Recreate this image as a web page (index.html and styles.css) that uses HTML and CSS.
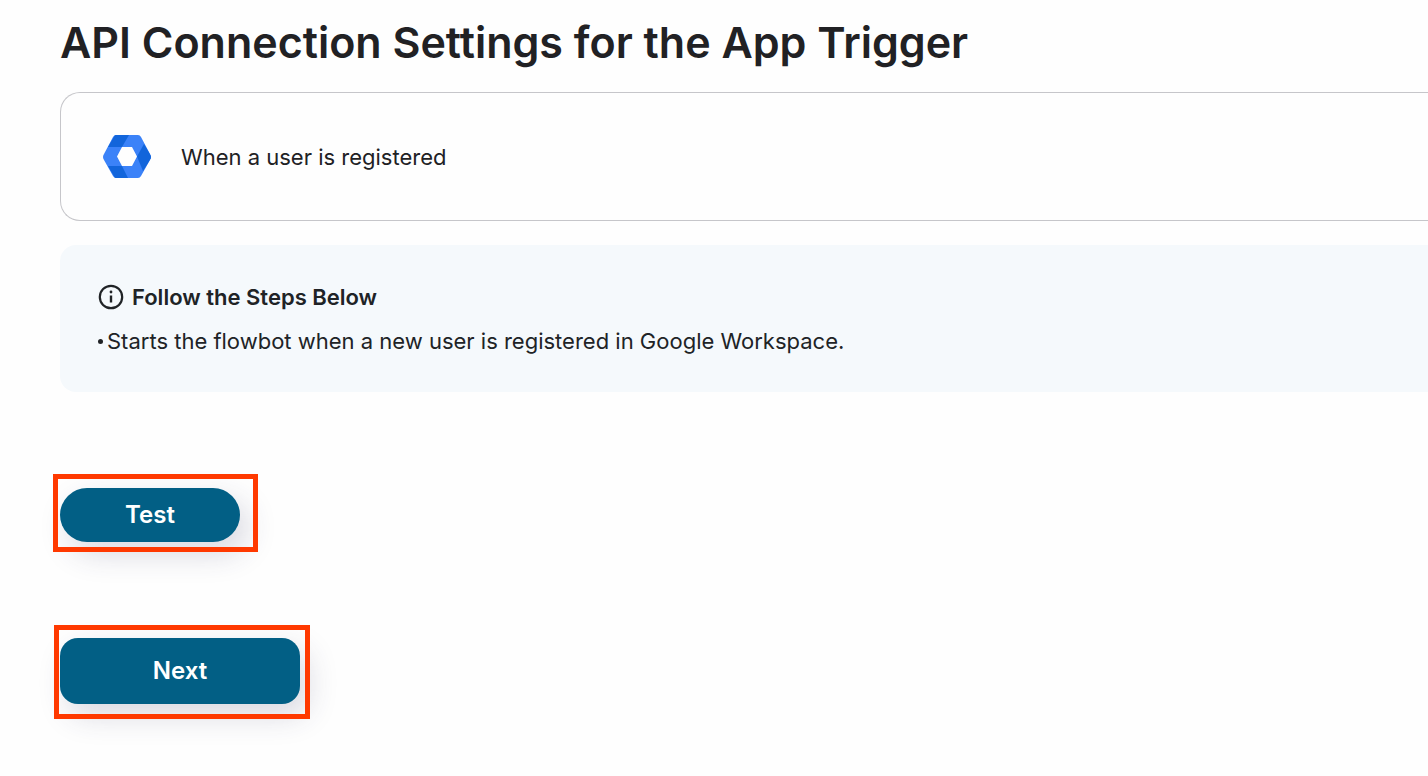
FILE: index.html
```html
<!DOCTYPE html>
<html lang="en">
<head>
<meta charset="UTF-8">
<meta name="viewport" content="initial-scale=1, width=device-width">
<title>API Connection Settings</title>
<link rel="stylesheet" href="styles.css">
</head>
<body>
<main>
<h1>API Connection Settings for the App Trigger</h1>
<section class="trigger">
	<svg class="logo" viewBox="0 0 48 43" aria-hidden="true">
		<defs>
			<clipPath id="hexagon"><path clip-rule="evenodd" d="M13 0H35Q37 0 38 2L47 19Q49 22 47 25L38 41Q37 43 35 43H13Q11 43 10 41L1 25Q-1 22 1 19L10 2Q11 0 13 0ZM19 12L14 21.500L19 31H29L34 21.500L29 12Z"/></clipPath>
		</defs>
		<g clip-path="url(#hexagon)">
			<path fill="#3b82f8" d="M0 0H48V43H0Z"/>
			<path fill="#1265db" d="M5 12L12 0H26L19 12Z"/>
			<path fill="#1265db" d="M5 31H19L25 43H12Z"/>
			<path fill="#1265db" d="M41 9L49 22L40 36L34 21.500Z"/>
		</g>
	</svg>
	<p>When a user is registered</p>
</section>
<section class="steps">
	<h2>
		<svg class="info" viewBox="0 0 26 26" aria-hidden="true">
			<circle cx="13" cy="13" r="11.2" fill="none" stroke="#202326" stroke-width="2.2"/>
			<circle cx="13" cy="8" r="1.4" fill="#202326"/>
			<path fill="#202326" d="M11.8 11.5h2.4v7h-2.4z"/>
		</svg>
		Follow the Steps Below
	</h2>
	<ul>
		<li>Starts the flowbot when a new user is registered in Google Workspace.</li>
	</ul>
</section>
<div class="action action-test"><button type="button" class="pill">Test</button></div>
<div class="action action-next"><button type="button">Next</button></div>
</main>
</body>
</html>
```

FILE: styles.css
```css
* {box-sizing:border-box;}
body {margin:0; background:#fefefe; color:#212124; font-family:Inter, "Liberation Sans", sans-serif; font-size:22px; line-height:32px;}
main {padding:14px 0 56px 60px;}
h1, h2, p, ul {margin:0;}
h1 {font-size:43px; line-height:56px; font-weight:600; margin-bottom:22px;}

.trigger {display:flex; align-items:center; gap:30px; padding:42px; margin-bottom:24px; border:1px solid #c6c6ca; border-right:0; border-radius:20px 0 0 20px;}
.logo {width:48px; height:43px;}

.steps {padding:36px 38px 35px; margin-bottom:96px; background:#f5f9fc; border-radius:16px 0 0 16px; color:#202326;}
h2 {display:flex; align-items:center; gap:8px; margin-bottom:12px; font-size:22px; line-height:32px; font-weight:600;}
.info {width:26px; height:26px;}
.steps ul {padding:0; list-style:none;}
.steps li {display:flex; align-items:center; gap:4px;}
.steps li::before {content:""; width:5px; height:5px; border-radius:50%; background:#202326;}

.action {position:relative; width:fit-content;}
.action-test {margin-bottom:96px;}
button {display:block; width:240px; height:66px; padding:0; border:0; border-radius:18px; background:#025f85; color:#fff; font:600 24px/32px Inter, "Liberation Sans", sans-serif; box-shadow:8px 12px 30px rgba(50,50,93,0.18); cursor:pointer;}
.pill {width:180px; height:54px; border-radius:27px;}

/* highlight frames */
.action::after {content:""; position:absolute; border:5px solid #ff3900; pointer-events:none;}
.action-test::after {inset:-14px -18px -10px -7px;}
.action-next::after {inset:-13px -10px -15px -6px;}
```
